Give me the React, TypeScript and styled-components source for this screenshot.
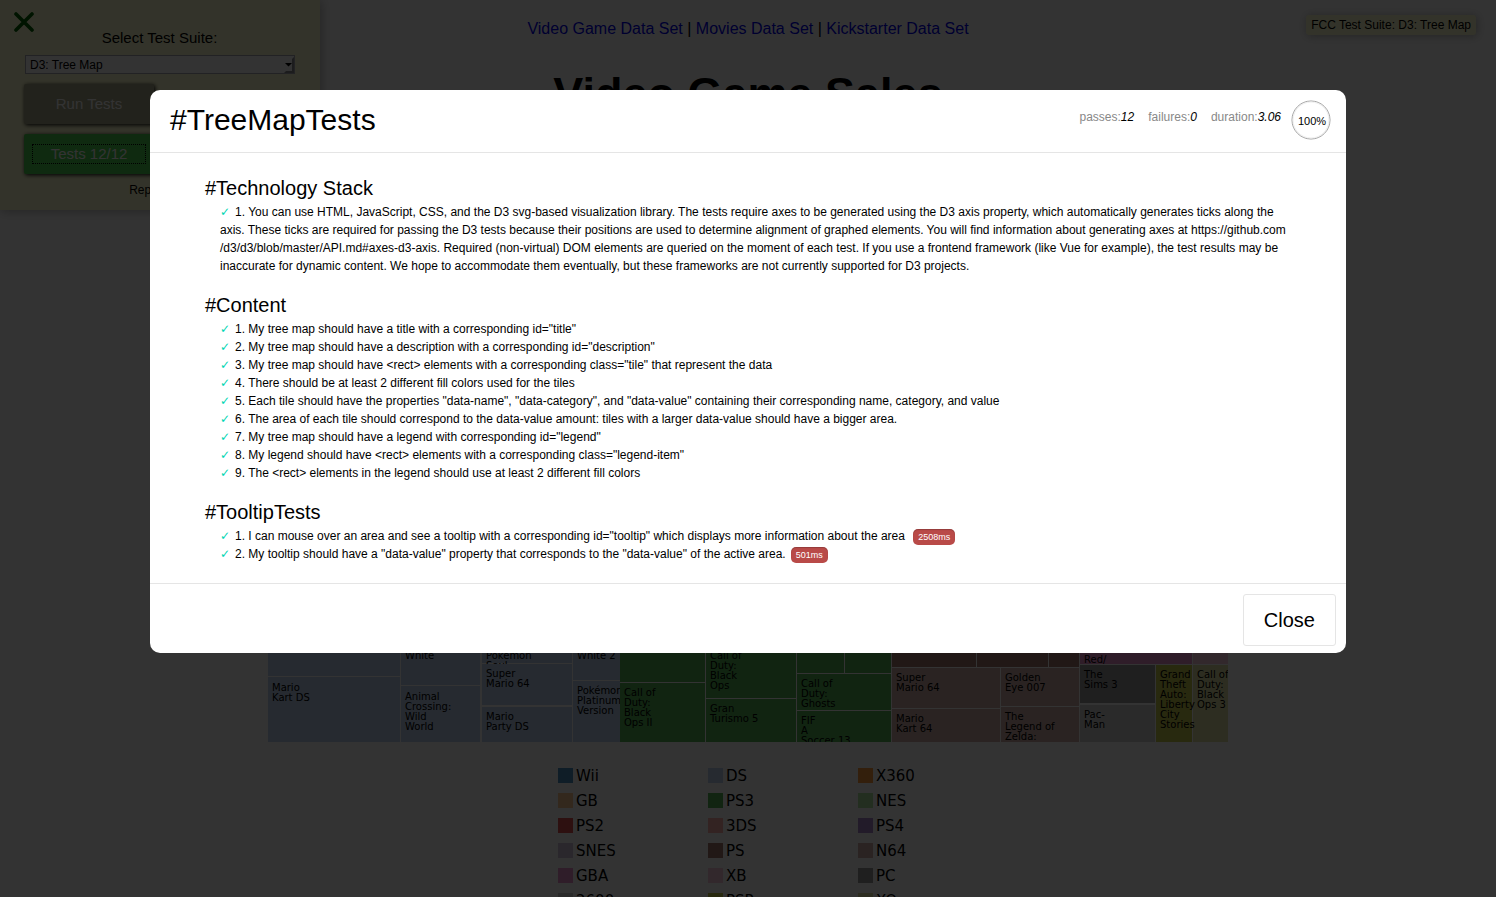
import React from "react";
import styled, { createGlobalStyle } from "styled-components";

const GlobalStyle = createGlobalStyle`
  *, *::before, *::after { box-sizing: border-box; }
  body {
    margin: 0;
    background: #fff;
    color: #000;
    font-family: "Liberation Sans", Arial, sans-serif;
  }
`;

const Page = styled.div`
  position: relative;
  height: 100vh;
  overflow: hidden;
`;

/* ---------- Tree map page ---------- */

const Main = styled.main`
  display: flex;
  flex-direction: column;
  align-items: center;
  padding-top: 20px;
`;

const Nav = styled.nav`
  font-size: 16px;
  line-height: 18px;
`;

const NavLink = styled.a`
  color: #0000ee;
  text-decoration: none;
`;

const Title = styled.h1`
  margin: 30px 0 52px;
  font-size: 45px;
  line-height: 52px;
`;

const TreeMap = styled.svg`
  display: block;
  flex: none;
  overflow: hidden;
  font: 10px "DejaVu Sans", sans-serif;
`;

const Legend = styled.ul`
  display: grid;
  grid-template-columns: repeat(3, 150px);
  grid-auto-rows: 15px;
  row-gap: 10px;
  margin: 26px 0 0;
  padding: 0 0 0 70px;
  list-style: none;
  font: 15px "DejaVu Sans", sans-serif;
`;

const LegendItem = styled.li`
  display: flex;
  align-items: flex-start;
  gap: 3px;
  line-height: 17px;
`;

const Swatch = styled.span<{ $color: string }>`
  width: 15px;
  height: 15px;
  background: ${(p) => p.$color};
`;

const platforms = [
  "Wii", "DS", "X360", "GB", "PS3", "NES", "PS2", "3DS", "PS4",
  "SNES", "PS", "N64", "GBA", "XB", "PC", "2600", "PSP", "XOne",
] as const;
type Platform = (typeof platforms)[number];

const palette: Record<Platform, string> = {
  Wii: "#4c92c3", DS: "#bed2ed", X360: "#ff993e", GB: "#ffc993", PS3: "#56b356",
  NES: "#ade5a1", PS2: "#de5253", "3DS": "#ffadab", PS4: "#a985ca", SNES: "#d1c0dd",
  PS: "#a3786f", N64: "#d0b0a9", GBA: "#e992ce", XB: "#f9c5db", PC: "#999999",
  "2600": "#d2d2d2", PSP: "#c9ca4e", XOne: "#e2e2a4",
};

type Tile = [Platform, number, number, number, number, string[]?, number?];

/* platform, x, y, width, height, label lines, baseline of the first line */
const tiles: Tile[] = [
  ["DS", 0, 0, 132, 504],
  ["DS", 0, 505, 132, 65, ["Mario", "Kart DS"], 519],
  ["DS", 133, 0, 79, 513, ["White"], 487],
  ["DS", 133, 514, 79, 56, ["Animal", "Crossing:", "Wild", "World"], 528],
  ["DS", 214, 0, 90, 491, ["Pokémon", "Soul"], 487],
  ["DS", 214, 492, 90, 41, ["Super", "Mario 64"]],
  ["DS", 214, 535, 90, 35, ["Mario", "Party DS"]],
  ["DS", 305, 0, 47, 508, ["White 2"], 487],
  ["DS", 305, 509, 47, 61, ["Pokémon", "Platinum", "Version"]],
  ["PS3", 352, 0, 85, 510],
  ["PS3", 352, 511, 85, 59, ["Call of", "Duty:", "Black", "Ops II"]],
  ["PS3", 438, 0, 90, 526, ["Call of", "Duty:", "Black", "Ops"], 487],
  ["PS3", 438, 527, 90, 43, ["Gran", "Turismo 5"]],
  ["PS3", 529, 0, 47, 501],
  ["PS3", 577, 0, 46, 501],
  ["PS3", 529, 502, 94, 36, ["Call of", "Duty:", "Ghosts"]],
  ["PS3", 529, 539, 94, 31, ["FIF", "A", "Soccer 13"]],
  ["PS", 624, 0, 84, 495],
  ["PS", 709, 0, 71, 495],
  ["PS", 781, 0, 30, 495],
  ["N64", 624, 496, 108, 40, ["Super", "Mario 64"]],
  ["N64", 624, 537, 108, 33, ["Mario", "Kart 64"]],
  ["N64", 733, 496, 78, 38, ["Golden", "Eye 007"]],
  ["N64", 733, 535, 78, 35, ["The", "Legend of", "Zelda:"]],
  ["GBA", 812, 0, 112, 492, ["Red/"], 491],
  ["XB", 925, 0, 35, 492],
  ["PC", 812, 493, 75, 38, ["The", "Sims 3"]],
  ["2600", 812, 533, 75, 37, ["Pac-", "Man"]],
  ["XOne", 925, 493, 35, 77, ["Call of", "Duty:", "Black", "Ops 3"]],
  ["PSP", 888, 493, 36, 77, ["Grand", "Theft", "Auto:", "Liberty", "City", "Stories"]],
];

/* ---------- Test suite panel ---------- */

const SuitePanel = styled.aside`
  position: absolute;
  top: 0;
  left: 0;
  width: 320px;
  height: 210px;
  padding: 29px 25px 0 24px;
  background: #ffffd1;
  box-shadow: 1px 1px 10px rgba(128, 128, 128, 0.6);
  display: flex;
  flex-direction: column;
  align-items: flex-start;
`;

const FoldoutToggle = styled.button`
  position: absolute;
  top: 12px;
  left: 14px;
  width: 20px;
  height: 20px;
  padding: 0;
  border: 0;
  background: none;

  svg { display: block; }
`;

const SuiteLabel = styled.label`
  align-self: center;
  font-size: 15px;
  line-height: 18px;
`;

const SelectBox = styled.div`
  position: relative;
  align-self: stretch;
  margin: 8px 0 10px 1px;

  svg {
    position: absolute;
    top: 1px;
    right: 1px;
    pointer-events: none;
  }
`;

const Select = styled.select`
  display: block;
  appearance: none;
  width: 100%;
  height: 19px;
  padding: 0 4px;
  border: 1px solid #a9a9b3;
  border-radius: 0;
  background: #fff;
  color: #000;
  font: 12px "Liberation Sans", Arial, sans-serif;
`;

const SuiteButton = styled.button<{ $color: string }>`
  width: 130px;
  height: 40px;
  margin-bottom: 10px;
  padding: 0 8px;
  border: 0;
  border-radius: 2px;
  background: ${(p) => p.$color};
  box-shadow: 1px 1px 4px #000;
  color: #fff;
  font: 15px "Liberation Sans", Arial, sans-serif;
`;

const ButtonLabel = styled.span<{ $focused?: boolean }>`
  display: block;
  border: 1px dotted ${(p) => (p.$focused ? "#000" : "transparent")};
  line-height: 18px;
`;

const ReportLink = styled.a`
  align-self: center;
  font-size: 12px;
  line-height: 14px;
  margin-top: -1px;
  color: #000;
  text-decoration: none;
`;

const SuiteBadge = styled.div`
  position: absolute;
  top: 15px;
  right: 20px;
  padding: 3px 5px;
  border-radius: 3px;
  background: #ffffd1;
  box-shadow: 1px 1px 10px rgba(128, 128, 128, 0.6);
  font-size: 12px;
  line-height: 14px;
`;

/* ---------- Results dialog ---------- */

const Overlay = styled.div`
  position: absolute;
  inset: 0;
  padding: 90px 150px;
  background: rgba(0, 0, 0, 0.8);
`;

const Dialog = styled.section`
  border-radius: 10px;
  background: #fff;
`;

const DialogHeader = styled.header`
  display: flex;
  align-items: flex-start;
  justify-content: space-between;
  height: 63px;
  padding: 10px 15px 0 20px;
  border-bottom: 1px solid #e5e5e5;
`;

const DialogTitle = styled.h2`
  margin: 2px 0 0;
  font-size: 30px;
  font-weight: 400;
  line-height: 36px;
`;

const Stats = styled.ul`
  display: flex;
  margin: 0;
  padding: 0;
  list-style: none;
  color: #888;
  font-size: 12px;
`;

const Stat = styled.li`
  margin: 10px 0 0 14px;
  line-height: 14px;

  em { color: #000; }
`;

const Progress = styled.li`
  margin-left: 10px;

  svg { display: block; }
`;

const Report = styled.div`
  padding: 5px 48px 20px 55px;
`;

const Suite = styled.section`
  padding-top: 18px;
`;

const SuiteTitle = styled.h3`
  margin: 0 0 3px;
  font-size: 20px;
  font-weight: 400;
  line-height: 24px;
`;

const Tests = styled.ul`
  margin: 0;
  padding: 0 0 0 15px;
  list-style: none;
  font-size: 12px;
  line-height: 18px;
`;

const Test = styled.li`
  &::before {
    content: "✓";
    display: inline-block;
    width: 15px;
    color: #00d6b2;
    font-family: "DejaVu Sans", sans-serif;
  }
`;

const Duration = styled.span`
  display: inline-block;
  height: 16px;
  margin-left: 5px;
  padding: 0 5px;
  border-radius: 5px;
  background: #b94a48;
  box-shadow: inset 0 1px 1px rgba(0, 0, 0, 0.2);
  color: #fff;
  font-size: 9px;
  line-height: 16px;
  vertical-align: middle;
`;

const DialogFooter = styled.footer`
  display: flex;
  justify-content: flex-end;
  padding: 10px 10px 7px;
  border-top: 1px solid #e5e5e5;
`;

const CloseButton = styled.button`
  height: 52px;
  padding: 0 20px;
  border: 1px solid #e5e5e5;
  border-radius: 3px;
  background: #fff;
  color: #000;
  font: 20px "Liberation Sans", Arial, sans-serif;
`;

type TestCase = { text: React.ReactNode; ms?: string };

const suites: { name: string; tests: TestCase[] }[] = [
  {
    name: "#Technology Stack",
    tests: [
      {
        text: (
          <>
            1. You can use HTML, JavaScript, CSS, and the D3 svg-based visualization library. The tests
            require axes to be generated using the D3 axis property, which automatically generates ticks
            along the axis. These ticks are required for passing the D3 tests because their positions are
            used to determine alignment of graphed elements. You will find information about generating
            axes at https://github.com
            <wbr />
            /d3/d3/blob/master/API.md#axes-d3-axis. Required (non-virtual) DOM elements are queried on the
            moment of each test. If you use a frontend framework (like Vue for example), the test results
            may be inaccurate for dynamic content. We hope to accommodate them eventually, but these
            frameworks are not currently supported for D3 projects.
          </>
        ),
      },
    ],
  },
  {
    name: "#Content",
    tests: [
      { text: '1. My tree map should have a title with a corresponding id="title"' },
      { text: '2. My tree map should have a description with a corresponding id="description"' },
      { text: '3. My tree map should have <rect> elements with a corresponding class="tile" that represent the data' },
      { text: "4. There should be at least 2 different fill colors used for the tiles" },
      { text: '5. Each tile should have the properties "data-name", "data-category", and "data-value" containing their corresponding name, category, and value' },
      { text: "6. The area of each tile should correspond to the data-value amount: tiles with a larger data-value should have a bigger area." },
      { text: '7. My tree map should have a legend with corresponding id="legend"' },
      { text: '8. My legend should have <rect> elements with a corresponding class="legend-item"' },
      { text: "9. The <rect> elements in the legend should use at least 2 different fill colors" },
    ],
  },
  {
    name: "#TooltipTests",
    tests: [
      { text: '1. I can mouse over an area and see a tooltip with a corresponding id="tooltip" which displays more information about the area ', ms: "2508ms" },
      { text: '2. My tooltip should have a "data-value" property that corresponds to the "data-value" of the active area.', ms: "501ms" },
    ],
  },
];

export default function App() {
  return (
    <Page>
      <GlobalStyle />
      <Main>
        <Nav>
          <NavLink href="#games">Video Game Data Set</NavLink> |{" "}
          <NavLink href="#movies">Movies Data Set</NavLink> |{" "}
          <NavLink href="#kickstarter">Kickstarter Data Set</NavLink>
        </Nav>
        <Title>Video Game Sales</Title>
        <TreeMap width="960" height="570" viewBox="0 0 960 570">
          {tiles.map(([platform, x, y, w, h, lines = [], baseline = y + 13], i) => (
            <g key={i}>
              <rect x={x} y={y} width={w} height={h} fill={palette[platform]} />
              <text>
                {lines.map((line, n) => (
                  <tspan key={n} x={x + 4} y={baseline + n * 10}>
                    {line}
                  </tspan>
                ))}
              </text>
            </g>
          ))}
        </TreeMap>
        <Legend>
          {platforms.map((p) => (
            <LegendItem key={p}>
              <Swatch $color={palette[p]} />
              {p}
            </LegendItem>
          ))}
        </Legend>
      </Main>

      <SuitePanel>
        <FoldoutToggle aria-label="Close test panel">
          <svg width="20" height="20" viewBox="0 0 20 20">
            <path d="M2 2 18 18M18 2 2 18" stroke="#006400" strokeWidth="3.6" strokeLinecap="round" />
          </svg>
        </FoldoutToggle>
        <SuiteLabel htmlFor="suite">Select Test Suite:</SuiteLabel>
        <SelectBox>
          <Select id="suite" defaultValue="tree">
            <option value="tree">D3: Tree Map</option>
          </Select>
          <svg width="10" height="17" viewBox="0 0 10 17">
            <path d="M10 1V17H0L2 15H8V3Z" fill="#8c8c92" />
            <path d="M1 7H8L4.500 10.500Z" fill="#000" />
          </svg>
        </SelectBox>
        <SuiteButton $color="#a9a98a">
          <ButtonLabel>Run Tests</ButtonLabel>
        </SuiteButton>
        <SuiteButton $color="#4bd24f">
          <ButtonLabel $focused>Tests 12/12</ButtonLabel>
        </SuiteButton>
        <ReportLink href="#report">Report Bug</ReportLink>
      </SuitePanel>
      <SuiteBadge>FCC Test Suite: D3: Tree Map</SuiteBadge>

      <Overlay>
        <Dialog role="dialog" aria-labelledby="dialog-title">
          <DialogHeader>
            <DialogTitle id="dialog-title">#TreeMapTests</DialogTitle>
            <Stats>
              <Stat>passes:<em>12</em></Stat>
              <Stat>failures:<em>0</em></Stat>
              <Stat>duration:<em>3.06</em></Stat>
              <Progress>
                <svg width="40" height="40" viewBox="0 0 40 40">
                  <circle cx="20" cy="20" r="19" fill="none" stroke="#9f9f9f" />
                  <circle cx="20" cy="20" r="18" fill="none" stroke="#eee" />
                  <text x="21" y="25" fontSize="11" textAnchor="middle" fill="#000">100%</text>
                </svg>
              </Progress>
            </Stats>
          </DialogHeader>
          <Report>
            {suites.map((suite) => (
              <Suite key={suite.name}>
                <SuiteTitle>{suite.name}</SuiteTitle>
                <Tests>
                  {suite.tests.map((test, i) => (
                    <Test key={i}>
                      {test.text}
                      {test.ms && <Duration>{test.ms}</Duration>}
                    </Test>
                  ))}
                </Tests>
              </Suite>
            ))}
          </Report>
          <DialogFooter>
            <CloseButton>Close</CloseButton>
          </DialogFooter>
        </Dialog>
      </Overlay>
    </Page>
  );
}
